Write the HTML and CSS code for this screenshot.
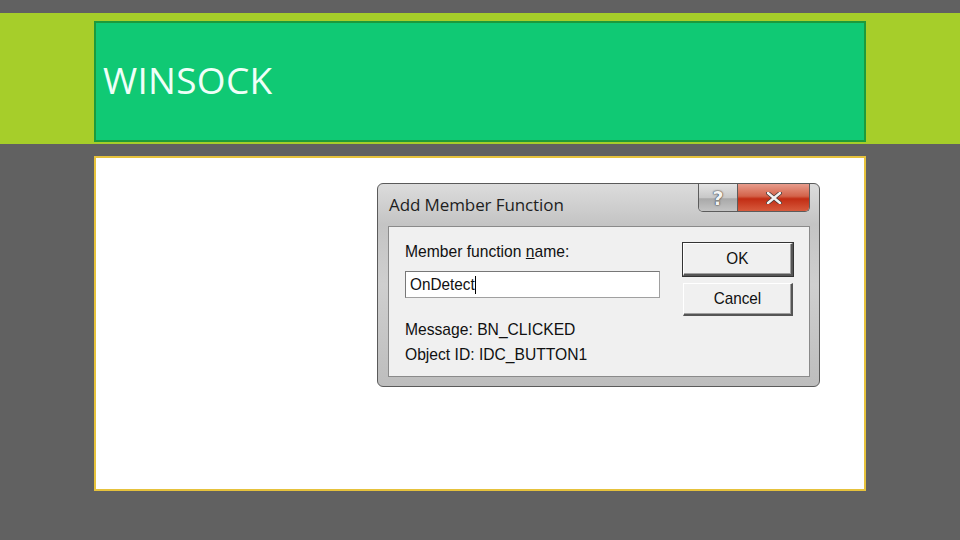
FILE: index.html
```html
<!DOCTYPE html>
<html lang="en">
<head>
    <meta charset="UTF-8">
    <title>Winsock</title>
    <link rel="stylesheet" href="styles.css">
</head>
<body>
    <div class="band">
        <div class="title-box">
            <h1 class="title">WINSOCK</h1>
        </div>
    </div>
    <div class="content">
        <div class="dialog">
            <div class="titlebar">
                <span class="caption">Add Member Function</span>
                <div class="caption-buttons">
                    <span class="cap-btn help">?</span>
                    <span class="cap-btn close">
                        <svg width="16" height="12" viewBox="0 0 16 12">
                            <path d="M2 1 L14 11 M14 1 L2 11" stroke="#4a3a38" stroke-width="4" stroke-linecap="round"/>
                            <path d="M2 1 L14 11 M14 1 L2 11" stroke="#f2f2f2" stroke-width="2.4" stroke-linecap="round"/>
                        </svg>
                    </span>
                </div>
            </div>
            <div class="client">
                <div class="fields">
                    <div class="label">Member function <u>n</u>ame:</div>
                    <div class="input"><span class="value">OnDetect</span><span class="caret"></span></div>
                    <div class="info">
                        <div>Message: BN_CLICKED</div>
                        <div>Object ID: IDC_BUTTON1</div>
                    </div>
                </div>
                <div class="actions">
                    <button class="btn default"><span>OK</span></button>
                    <button class="btn"><span>Cancel</span></button>
                </div>
            </div>
        </div>
    </div>
</body>
</html>
```

FILE: styles.css
```css
body {
    margin: 0;
    background-color: #616161;
    font-family: "Liberation Sans", Arial, sans-serif;
}
.band {
    margin-top: 13px;
    background-color: #a6ce2a;
    padding: 8px 94px 2px;
}
.title-box {
    height: 117px;
    background-color: #10c974;
    border: 2px solid #1c9a3c;
    display: flex;
    align-items: center;
    padding-left: 7px;
}
.title {
    margin: 0 0 4px;
    font-family: "Open Sans", sans-serif;
    font-weight: 400;
    font-size: 37px;
    color: #effff8;
    letter-spacing: 0.3px;
}
.content {
    box-sizing: border-box;
    margin: 12px 94px 0;
    height: 335px;
    background-color: #fff;
    border: 2px solid #e6c23c;
    padding: 25px 0 0 281px;
}
.dialog {
    width: 443px;
    height: 204px;
    border: 1px solid #5a5a5a;
    border-radius: 6px;
    background: linear-gradient(180deg, #dcdcdc 0%, #c4c4c4 20%, #cfcfcf 50%, #bdbdbd 100%);
    box-sizing: border-box;
    padding: 0 9px 9px 10px;
    display: flex;
    flex-direction: column;
}
.titlebar {
    height: 42px;
    display: flex;
    justify-content: space-between;
    align-items: flex-start;
}
.caption {
    margin-top: 9px;
    margin-left: 1px;
    font-family: "Open Sans", sans-serif;
    font-size: 17px;
    color: #1e1e1e;
    letter-spacing: -0.1px;
}
.caption-buttons {
    display: flex;
    border: 1px solid #5c5c5c;
    border-top: none;
    border-radius: 0 0 5px 5px;
    overflow: hidden;
}
.cap-btn {
    height: 27px;
    display: flex;
    align-items: center;
    justify-content: center;
}
.help {
    width: 38px;
    background: linear-gradient(180deg, #e4e4e4 0%, #c8c8c8 50%, #a9a9a9 55%, #c4c4c4 100%);
    border-right: 1px solid #5c5c5c;
    font-family: "DejaVu Sans", sans-serif;
    font-weight: bold;
    font-size: 19px;
    color: #f4f4f4;
    text-shadow: 0 0 2px #333, 0 0 1px #333;
}
.close {
    width: 71px;
    background: linear-gradient(180deg, #e79c8c 0%, #d3634a 45%, #c22d14 55%, #d75a3c 100%);
}
.client {
    flex: 1;
    background-color: #f0f0f0;
    border: 1px solid #8a8a8a;
    display: flex;
    padding: 15px 16px 0 16px;
    gap: 23px;
}
.fields {
    width: 255px;
    font-size: 17px;
    color: #111;
}
.label {
    transform: scaleX(0.92);
    transform-origin: left;
    white-space: nowrap;
    height: 29px;
}
.input {
    box-sizing: border-box;
    height: 27px;
    background-color: #fff;
    border: 1px solid #a0a0a0;
    border-top-color: #777;
    border-left-color: #777;
    display: flex;
    align-items: center;
    padding-left: 4px;
}
.value {
    display: inline-block;
    transform: scaleX(0.9);
    transform-origin: left;
    margin-right: -7px;
}
.caret {
    width: 1px;
    height: 18px;
    background-color: #000;
}
.info {
    margin-top: 19px;
    line-height: 25px;
    transform: scaleX(0.92);
    transform-origin: left;
    white-space: nowrap;
}
.actions {
    display: flex;
    flex-direction: column;
    gap: 7px;
    padding-top: 1px;
}
.btn {
    width: 110px;
    height: 33px;
    background-color: #f0f0f0;
    border: 1px solid #888;
    border-right: 2px solid #555;
    border-bottom: 2px solid #555;
    border-top-color: #fff;
    border-left-color: #fff;
    box-shadow: inset -1px -1px #a0a0a0;
    font-family: "Liberation Sans", Arial, sans-serif;
    font-size: 17px;
    color: #111;
    padding: 0;
}
.btn span {
    display: inline-block;
    transform: scaleX(0.9);
}
.btn.default {
    outline: 1px solid #333;
}
```
